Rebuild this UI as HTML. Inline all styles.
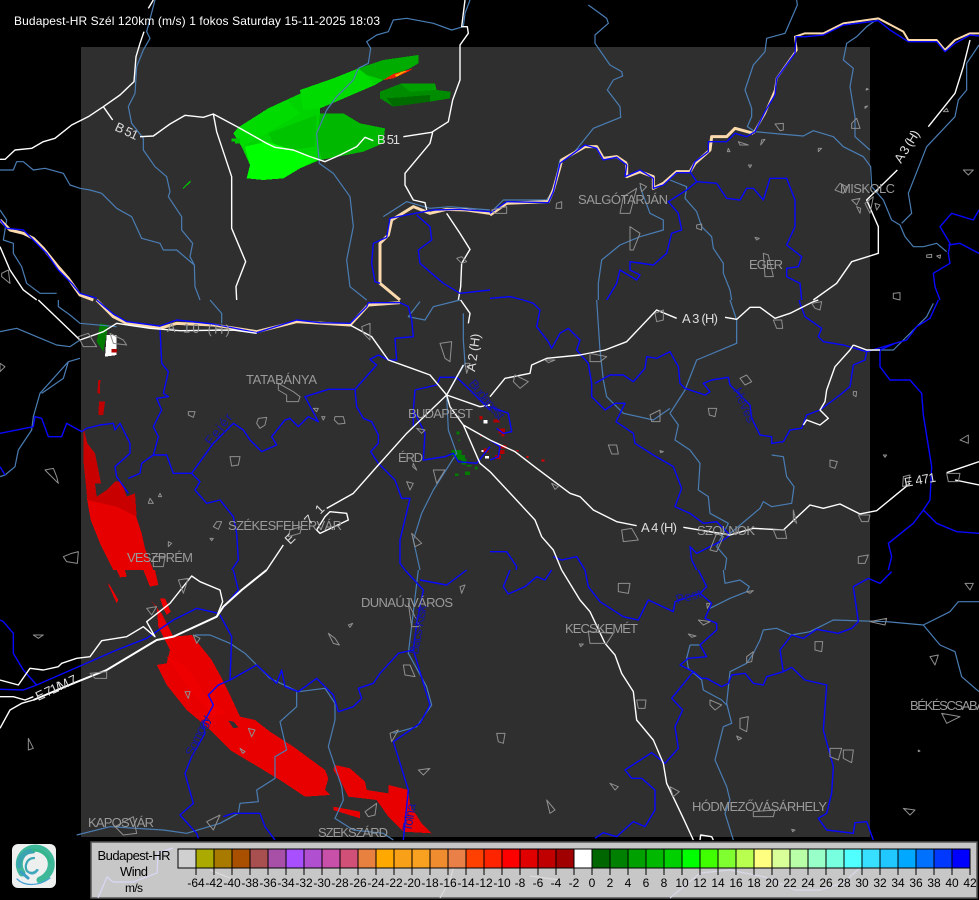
<!DOCTYPE html>
<html><head><meta charset="utf-8"><style>
html,body{margin:0;padding:0;background:#000;width:979px;height:900px;overflow:hidden}
svg{display:block;font-family:"Liberation Sans",sans-serif}
.t path{vector-effect:non-scaling-stroke;fill:none;stroke-linejoin:round}
.r{stroke:#fff;stroke-width:1.4}
.s{stroke:#4a7db4;stroke-width:1.2}
.b{stroke:#0808ff;stroke-width:1.4}
.c{stroke:#8f8f8f;stroke-width:1}
.n{stroke:#fad9ac;stroke-width:3}
.l{fill:#9a9a9a;font-size:13px}
.w{fill:#ddd;font-size:13px}
.d{fill:#1414a8;font-size:13px}
.k{font-size:12px;fill:#000;text-anchor:middle}
</style></head><body>
<svg width="979" height="900" viewBox="0 0 979 900" xmlns="http://www.w3.org/2000/svg">
<rect width="979" height="900" fill="#000"/>
<rect x="81" y="47" width="789" height="790" fill="#2f2f2f"/>

<!-- radar -->
<g shape-rendering="crispEdges">
<g transform="scale(.33333)">
<path fill="#00d400" d="M715 382 805 325 1000 235 1075 205 1150 180 1255 165 1255 190 1230 205 1150 240 1125 255 1020 300 960 325 960 340 1030 340 1080 370 1155 385 1150 430 1090 455 960 480 900 505 850 535 790 540 740 535 750 495 725 440 700 400Z"/>
<path fill="#00dc00" d="M715 382 805 325 860 300 900 340 800 400 725 440 700 400Z"/>
<path fill="#00ff00" d="M735 440 800 425 880 450 950 480 900 505 850 535 790 540 740 535 750 495Z"/>
<path fill="#00b800" d="M960 340 1030 340 1080 370 1155 385 1150 430 1090 455 965 478 950 420Z"/>
<path fill="#00c400" d="M805 400 950 345 945 440 880 450 820 430Z"/>
<path fill="#00ac00" d="M1075 205 1150 180 1255 165 1255 190 1230 205 1150 240 1100 225Z"/>
<path fill="#00dc00" d="M900 270 1000 235 1075 205 1100 225 1125 255 1020 300 960 325 910 330Z"/>
<path fill="#008c00" d="M1140 275 1205 250 1305 250 1310 270 1352 275 1350 295 1290 305 1180 320 1140 295Z"/>
<path fill="#006c00" d="M1160 295 1290 285 1290 305 1180 320Z"/>
<path fill="#00a000" d="M1200 250 1305 250 1310 270 1230 275Z"/>
<path fill="#ee2200" d="M1150 240 1180 222 1240 205 1225 215 1180 235Z"/>
<path fill="#ffa800" d="M1185 225 1210 214 1222 212 1190 230Z"/>
<path fill="#00c800" d="M548 565 572 540 572 546 551 566Z M695 415h25v15h-15v-5h-10Z"/>
</g>
<g transform="translate(0,300) scale(.33333)">
<path fill="#e60000" d="M260 590 320 595 405 640 425 700 435 745 460 810 340 810 300 730 272 660Z"/>
<path fill="#c80000" d="M250 380 262 430 285 460 303 550 285 550 290 590 320 570 345 545 365 545 380 590 405 580 410 650 350 620 262 600 250 480Z"/>
<path fill="#c00000" d="M295 240 301 240 300 280 292 280Z M297 305 315 305 310 345 295 345Z"/>
<path fill="#007a00" d="M300 70 325 75 310 155 290 125Z"/>
<path fill="#fff" d="M320 105 350 105 350 165 315 170Z"/>
<path fill="#b00000" d="M335 147h16v10h-16Z"/>
</g>
<g transform="translate(0,570) scale(.33333)">
<path fill="#e60000" d="M350 0h25l5 20-20 2Z M430 0h35l10 45-25 5Z"/>
<path fill="#ee0000" d="M325 38 355 90 350 100 325 45Z M480 85 495 85 512 125 500 135 490 115Z"/>
<path fill="#e80000" d="M455 95 485 130 520 200 575 195 635 270 665 325 690 375 720 440 765 450 810 485 880 530 975 600 985 625 975 660 990 675 915 680 840 630 790 600 690 540 620 470 560 420 500 345 470 285 500 280 510 240 475 170 470 110Z"/>
<path fill="#ee0000" d="M500 260 560 290 620 380 680 430 640 440 560 350Z"/>
<path fill="#2f2f2f" d="M685 452 700 455 716 472 700 475Z"/>
<path fill="#e80000" d="M1005 585 1050 595 1095 635 1100 660 1165 670 1165 645 1225 660 1230 705 1265 760 1295 790 1210 785 1165 740 1130 690 1045 680 1020 630 1000 600Z"/>
<path fill="#e80000" d="M1000 710 1080 725 1080 745 1000 720Z"/>
</g>
<g transform="translate(400,370) scale(.33333)">
<path fill="#b00000" d="M238 138h10v10h-10Z M280 148h18v10h-18Z M295 175h20v15h-20Z M305 190h8v10h-8Z M300 225h20v10h-20Z M295 240h18v12h-18Z M285 255h18v12h-18Z M250 235h15v12h-15Z M240 195h5v5h-5Z"/>
<path fill="#e00000" d="M350 240h5v5h-5Z M380 258h6v6h-6Z M425 268h8v6h-8Z"/>
<path fill="#fff" d="M250 150h12v10h-12Z M255 258h12v8h-12Z M245 240h6v6h-6Z"/>
<path fill="#007c00" d="M170 185h8v8h-8Z M155 240h30v18h-30Z M170 255h25v15h-25Z M185 265h15v18h-15Z M200 285h15v5h-15Z M195 305h15v10h-15Z M165 310h10v8h-10Z M225 290h8v8h-8Z M175 208h5v5h-5Z"/>
</g>
</g>

<!-- map lines -->
<g class="t">
<g transform="scale(.33333)">
<path class="s" d="M465 0 440 95 450 115 430 150 410 200 405 280 385 320 395 370 430 415 430 450 465 500 500 530 510 575 505 590 545 650 545 690 578 730 570 770 583 795 585 860 600 900"/>
<path class="s" d="M0 510 40 510 50 485 70 485 100 510 135 505 190 520 210 555 240 565 270 570 305 580 350 625 395 650 425 715 480 730 490 750 530 750 583 795"/>
<path class="s" d="M1390 80 1355 90 1300 70 1220 55 1180 60 1165 95 1130 105 1100 125 1112 145 1105 190 1075 205 1060 240 1010 290 980 330 950 400 958 490 1000 520 1050 590 1060 680 1040 780 1050 860 1100 900 M1410 0 1395 40 1390 80"/>
<path class="s" d="M0 630 20 660 10 720 40 730 40 760 65 800 80 850 120 880 170 880 M1150 650 1220 605 1290 625 1350 620 1470 630"/>
<path class="r" d="M460 0 445 25 M432 95 420 130 408 170 402 245 360 285 310 320 265 350 215 375 165 415 130 425 95 445 45 450 15 478 0 478 M310 320 338 360 M420 410 460 408 510 372 555 346 610 352 640 342 715 382 800 430 825 442 880 450 925 468 975 485 1020 465 1070 440 1095 412 1120 422 M1210 410 1295 397 1345 365 1358 300 1380 240 1380 135 1405 100 1402 80 1385 80 1395 0 M1298 397 1290 430 1215 520 1215 555 1240 600 1275 608 1280 630 M640 342 650 395 665 440 695 530 695 685 737 785 708 860 710 900 M1340 640 1380 700 1410 748 1385 790 1382 860 1375 900 M0 740 30 810 70 870 110 900"/>
<path class="n" d="M0 660 30 690 70 700 100 715 130 745 170 795 205 835 240 885 280 900 M1200 900 1140 850 1140 730 1165 705 1175 660 1240 620 1290 640 1340 628 1400 630 1470 640"/>
<path class="b" d="M0 660 20 685 70 690 100 720 140 760 175 810 215 850 240 880 290 895 M1120 730 1115 790 1125 845 1140 850 M1120 730 1160 712 1170 655 1220 645 1300 630 1380 628 1470 635 M1250 645 1290 680 1295 720 1255 750 1260 790 1330 850 1380 880 1470 870"/>
<path class="c" d="M5 820 25 810 30 850 5 830Z M1370 775 1385 770 1400 785 1385 790Z"/>
</g>
<g transform="translate(490,0) scale(.33333)">
<path class="s" d="M295 15 350 55 355 70 315 105 315 130 360 195 395 215 398 228 370 240 352 270 390 320 392 352 310 385 250 460 210 480 190 570 170 600 40 600 0 640"/>
<path class="s" d="M920 0 922 15 885 100 830 115 825 155 790 195 765 270 785 325 785 350 772 380 795 395 870 402 940 408 970 392 1030 410 1060 440 1120 470 1142 500 1145 560 1180 600 1205 660 1230 675 1245 710 1270 740 1300 740 1340 730 1370 755 M1165 55 1130 80 1100 110 1070 130 1060 180 1090 205 1080 260 1095 350 1095 410 1140 450 M1467 135 1430 190 1430 270 1405 300 1395 350 1310 440 1255 580 1265 640 1235 670 M540 540 590 560 585 595 620 635 635 680 665 710 670 745 700 790 700 820 720 870 725 900 M450 560 480 640 520 660 520 690 450 710 390 735 335 780 325 850 325 900"/>
<path class="n" d="M0 645 50 610 175 605 190 570 210 500 215 480 285 440 320 440 340 475 380 470 410 490 M410 490 410 530 450 515 490 530 490 565 520 550 560 515 600 515 615 490 660 450 665 410 710 410 735 385 790 400"/>
<path class="n" style="stroke-width:2" d="M790 400 825 340 855 270 860 235 920 150 915 110 945 100 1000 100 1060 70 1165 55 1240 95 1255 120 1340 120 1365 150 1395 120 1440 100 1467 100"/>
<path class="b" d="M0 640 50 605 175 608 190 575 210 490 285 435 320 445 340 480 380 472 410 495 405 530 450 510 490 535 490 565 520 555 560 518 600 518 615 485 655 455 655 425 710 425 735 400 770 410 795 395 825 335 855 285 860 235 915 160 918 110 945 110 1000 105 1060 75 1165 62 1200 90 1255 125 1340 125 1365 155 1395 130 1440 105 1467 108"/>
<path class="b" d="M600 515 620 545 680 550 710 595 750 600 770 565 790 565 820 600 840 535 890 535 915 600 915 680 890 735 935 770 925 800 890 805 890 830 930 850 935 900 M620 545 590 570 535 605 565 640 575 690 545 700 530 760 490 795 420 785 420 810 450 825 440 840 390 810 380 850 350 900 M0 895 60 890 100 900 M1467 630 1450 660 1385 640 1350 680 1380 730 1375 760 1380 790 1330 820 1335 860 1350 900 M1375 735 1410 730 1467 760"/>
<path class="r" d="M1440 120 1420 200 1395 280 1315 380 M1222 510 1130 600 1165 680 1165 760 1085 785 1040 850 970 900"/>
<path class="c" d="M1050 550 1070 560 1060 580 1035 570Z M1085 600 1110 595 1100 615Z M1100 620 1112 625 1110 640Z M1125 610 1150 590 1140 640Z M1155 610 1170 615 1160 630Z M400 590 440 565 420 640 390 640Z M450 550 470 560 455 575Z M420 680 450 700 430 750 420 750Z M855 372 880 370 880 390 870 392Z M1085 370 1100 355 1110 385 1085 385Z M200 610 215 605 215 625 198 625Z M620 675 635 672 635 690 620 685Z M820 760 835 765 850 830 825 830Z M1210 880 1230 878 1230 900 1210 895Z M1420 510 1450 510 1435 525Z M1370 325 1375 335 1360 335Z M745 425 775 435 750 435Z M815 420 825 418 812 435Z M715 445 720 455 712 455Z M775 495 785 495 780 503Z M5 630 50 620 50 640 15 640Z M795 712 808 715 800 720Z M985 445 995 445 985 455Z M1130 265 1135 268 1128 270Z M1125 320 1133 318 1125 325Z M1310 765 1325 763 1325 772 1310 772Z M1340 768 1352 765 1350 775Z"/>
</g>
<g transform="translate(0,300) scale(.33333)">
<path class="s" d="M0 95 50 85 110 110 170 135 210 140 240 120 M240 175 205 185 120 280 100 350 95 390 55 450 45 500 15 525 0 530 M205 185 190 235 125 280 M175 0 175 20 210 45 240 70 350 80 M630 0 665 40 665 70 M1260 5 1225 50 1275 60 1300 20 1380 0 M1390 40 1390 120 1395 190 1340 285 1345 390 1370 460 1300 570 1265 640 1240 720 1260 810 M1270 480 1335 470"/>
<path class="n" d="M290 0 340 50 380 70 480 85 530 70 640 75 770 95 890 65 1050 75 1105 15 1200 8"/>
<path class="b" d="M290 0 340 42 380 65 480 78 530 60 640 72 770 98 890 60 960 68 1050 70 1100 20 1105 8 1200 8"/>
<path class="b" d="M480 85 485 190 505 215 490 280 505 290 470 295 485 330 460 380 475 410 460 465 500 465 520 520 575 520 640 430 700 370 730 390 750 420 785 455 830 435 815 410 855 360 870 355 895 380 925 350 955 365 915 290 985 268 1065 268 1130 195 1110 178 1135 165 1165 180 1190 180 1185 115 1240 110 1235 60 1225 20 1200 8 M1065 268 1070 320 1090 355 1115 365 1135 405 1135 430 1112 455 1135 490 1185 540 1205 595 1230 595 1200 720 1200 790 1215 810 M1240 380 1240 330 1245 270 1310 255 1320 232 1370 232 1410 270 1470 330 M1240 330 1275 400 1270 480 1335 470 1360 460 1375 485 1430 490 1470 440 M0 400 100 380 105 350 125 355 145 410 185 410 200 370 245 395 260 385 300 375 340 370 345 390 360 370 390 430 390 460 345 500 350 530 385 580 M385 535 420 520 425 490 460 465 M575 520 600 545 585 570 620 610 660 600 700 650 710 700 715 780 695 810 M0 500 15 525"/>
<path class="r" d="M115 0 240 120 M240 120 310 95 350 70 450 85 540 92 700 90 770 100 M1050 75 1115 110 1165 180 1235 205 1290 225 1340 285 1440 320 1470 315 M1340 285 1220 400 1135 495 1060 580 980 625 M850 735 800 810 M1390 195 1340 285 M1382 0 1410 40 1405 70 M1340 285 1350 320 1390 375 1440 490 1470 515 M1390 375 1470 420"/>
<path class="r" d="M990 635 1040 640 1045 660 960 700 950 690 975 650Z"/>
<path class="c" d="M835 250 880 275 900 290 895 305 860 305 860 285 835 270Z M565 335 585 335 580 352 565 345Z M775 355 800 352 795 375 780 385 770 370Z M1005 350 1030 350 1035 370 1015 372 1003 360Z M690 470 720 470 715 495 695 498Z M135 510 160 505 170 530 175 550 150 525Z M650 665 665 665 655 688 640 680Z M1320 130 1355 125 1350 185 1335 175Z M1240 490 1250 510 1238 500Z M190 770 215 760 235 755 232 790 200 785Z M450 595 460 610 445 610Z M1235 700 1245 740 1265 730Z M1300 510 1335 510 1310 550Z M1220 545 1240 550 1230 570Z M1250 385 1275 390 1265 400Z M940 325 955 325 950 335Z M965 350 975 350 970 360Z M630 715 640 715 635 722Z M505 725 515 730 505 740Z M0 190 15 200 0 215Z M235 110 265 100 290 140 250 140Z M330 100 370 120 380 135 340 130Z M1085 80 1110 70 1110 120 1090 100Z M1395 190 1410 190 1400 220Z M870 690 905 680 900 700 865 710Z M460 770 495 770 490 800 460 800Z M480 580 485 590 475 590Z"/>
</g>
<g transform="translate(490,300) scale(.33333)">
<path class="s" d="M720 0 740 60 740 130 620 180 585 270 540 340 565 375 555 420 600 450 630 490 625 570 655 590 660 640 715 670 680 740 710 775 705 810 M320 0 330 150 340 240 350 290 400 340 490 360 540 325 M845 465 880 470 890 530 912 560 905 610 845 620 820 605 810 625 715 705 M1170 150 1210 150 1310 50 1330 10"/>
<path class="b" d="M100 0 130 10 150 30 140 80 175 125 185 145 210 100 235 85 270 120 260 150 295 190 305 250 305 290 345 330 375 310 405 310 378 365 430 400 435 430 490 465 550 500 575 565 555 620 600 640 640 670 680 665 720 705 700 720 620 760 600 740 605 780 620 810 M315 250 360 225 400 225 430 245 465 205 470 170 500 175 540 155 565 200 570 250 585 265 645 285 660 275 640 250 665 240 715 232 720 255 780 315 785 355 810 405 845 410 845 430 880 425 900 390 935 385 950 345 990 330 1050 285 1080 260 1090 195 1125 180 1130 155 1060 135 1000 125 985 110 995 85 945 50 930 10 928 0 M1170 150 1215 130 1250 120 1280 80 1320 55 1345 0 M1170 150 1170 200 1200 240 1260 240 1295 280 1300 345 1325 500 1320 600 1300 630 1340 670 1400 695 1467 700 M1300 630 1270 670 1195 730 1205 770 1195 810 M0 755 50 755 80 800 78 810 M190 770 215 780 260 770 285 810 M0 320 55 340 65 395 40 400 20 385 M0 420 30 440 25 470 0 480 M1130 155 1215 130"/>
<path class="r" d="M0 290 45 235 120 220 125 195 170 175 270 165 345 150 410 125 500 30 560 55 M705 52 740 58 780 22 810 22 855 55 900 40 970 5 985 0 M0 420 75 455 140 505 240 580 270 590 310 630 380 665 440 677 M580 682 720 705 790 685 880 690 960 615 1000 625 1050 612 1110 642 1160 632 1260 550 M1370 518 1467 485 M1395 540 1467 555 M0 515 70 590 135 660 155 710 190 750 215 810 M1090 135 1080 150 1035 200 1010 270 1005 305 990 330 1015 355 990 375 950 360 940 375 M1090 135 1130 150 1170 150"/>
<path class="c" d="M75 225 115 245 90 265 70 245Z M165 180 195 180 175 188Z M300 160 350 170 330 185 300 185Z M495 40 520 30 520 60 500 65Z M850 60 875 60 878 85 860 85Z M965 10 995 5 990 30 975 25Z M480 345 510 330 510 365 485 365Z M750 235 770 225 785 245 765 255Z M655 325 680 325 675 350 658 345Z M355 435 380 435 385 462 365 462Z M395 690 425 685 445 720 400 725Z M850 690 885 690 890 715 860 715Z M660 750 680 700 700 710 680 755Z M1020 480 1042 485 1035 505 1020 500Z M1105 645 1140 645 1135 665 1115 665Z M1105 770 1135 765 1125 790 1105 790Z M1410 420 1435 405 1435 430Z M1240 530 1260 525 1255 555 1238 560Z M1370 520 1410 520 1405 545 1375 545Z M1180 465 1190 465 1185 472Z M510 452 520 455 512 458Z M185 550 205 560 195 568Z M1090 275 1100 275 1098 290 1090 285Z M910 630 920 670 910 660Z"/>
</g>
<g transform="translate(0,570) scale(.33333)">
<path class="s" d="M585 195 630 195 690 220 735 250 770 285 810 325 895 365 975 355 1005 400 1005 450 985 530 1025 650 1030 690 1005 745 1060 780 1150 790 1180 810 M890 365 890 410 840 455 860 540 825 560 825 625 770 660 775 695 720 700 715 730 660 760 560 790 490 780 330 770 230 795 M1255 0 1225 250 1280 350 1295 405 1250 470 1180 490"/>
<path class="b" d="M700 0 715 60 655 130 590 115 520 150 440 205 350 240 110 345 70 360 0 358 M110 345 70 300 40 250 40 190 10 155 0 150 M660 135 695 200 690 330 770 285 830 340 845 300 855 350 895 365 950 325 1000 375 1015 425 1060 410 1085 385 1075 355 1120 340 1140 310 1195 250 1240 240 1250 160 1270 60 1215 0 M690 330 655 345 625 375 640 405 610 460 615 490 575 560 555 610 580 700 540 735 590 790 595 805 M1240 240 1290 405 1260 460 1180 515 1225 660 1210 810 M670 740 700 730 780 730 795 770 825 810 M1260 30 1340 45 1400 0"/>
<path class="r" style="stroke-width:2" d="M800 0 725 60 670 110 650 140 520 200 470 210 320 300 220 340 100 390"/>
<path class="r" d="M100 390 65 400 30 420 0 475 M0 380 40 380 75 390 100 380 M0 330 55 345 90 295 130 300 175 290 185 280 230 265 270 260 305 212 380 200 430 170 465 200 440 155 510 100 575 18 600 35 660 60 668 95 650 140"/>
<path class="c" d="M985 190 1005 205 1018 225 1000 220Z M1210 285 1230 285 1245 320 1215 315Z M1170 490 1195 480 1175 515Z M1255 600 1290 595 1270 615Z M1095 725 1130 700 1125 735 1105 740Z M620 755 660 735 640 780Z M345 770 400 740 410 790 370 795Z M745 475 765 480 755 500Z M555 365 570 365 565 385Z M85 505 100 535 85 540Z M100 195 130 195 115 205Z M535 30 565 25 550 70Z M440 115 470 110 455 135Z M1225 100 1260 170 1235 170Z M1380 50 1395 45 1385 70Z M720 535 735 545 728 550Z M1045 165 1058 160 1050 172Z M580 195 600 205 590 220Z M270 310 320 305 320 325 285 325Z"/>
</g>
<g transform="translate(490,570) scale(.33333)">
<path class="s" d="M700 0 705 40 750 30 778 50 770 65 720 85 660 115 M1467 95 1405 95 1380 125 1300 165 1190 155 1030 150 960 185 905 195 860 175 820 180 810 210 790 250 770 280 720 305 710 400 725 460 700 470 675 570 710 650 720 690 705 730 730 810 M600 225 630 225 M600 225 590 265 595 295 635 330 640 360 695 390 710 405 M1300 165 1350 225 1395 245 1415 320 1467 365"/>
<path class="b" d="M60 0 40 50 55 72 105 50 140 20 165 30 185 0 M285 0 295 50 330 95 400 140 445 150 475 90 550 125 555 95 630 70 650 50 625 0 M630 70 665 100 645 145 680 160 680 180 630 225 650 260 595 265 570 285 610 305 545 385 578 420 555 470 565 535 525 580 485 548 405 600 425 625 455 625 495 660 495 720 465 770 430 755 380 800 340 788 315 805 M610 305 635 325 650 325 695 350 715 340 725 315 765 310 790 340 820 345 830 320 880 305 905 292 945 330 1010 345 1000 480 1030 590 1025 670 1010 730 985 745 1010 780 1090 790 1095 758 1130 755 1150 810 M880 305 870 240 905 195 940 205 980 178 1045 190 1085 175 1105 155 1090 50 1135 25 1170 40 1205 5"/>
<path class="r" d="M215 0 270 90 300 125 345 220 375 255 395 310 430 365 440 450 490 510 520 580 530 640 580 745 610 810 M630 810 632 795 665 800 670 810"/>
<path class="c" d="M385 40 420 40 415 70 385 65Z M295 185 370 190 350 220 300 220Z M440 390 468 390 465 415 445 415Z M20 490 45 490 40 520 25 515Z M360 640 385 650 375 660Z M170 690 195 720 180 730Z M540 650 568 665 550 680Z M660 390 695 405 675 420 660 405Z M750 445 775 440 770 485 750 475Z M975 215 998 215 995 245 975 240Z M770 260 790 245 785 275 770 278Z M1020 535 1055 535 1045 570 1020 560Z M1060 540 1090 540 1085 578 1060 565Z M790 725 855 720 850 740 790 740Z M1240 715 1275 720 1260 735Z M1320 260 1345 255 1335 285Z M1355 430 1410 440 1370 460Z M1425 40 1450 40 1440 60Z M625 150 660 155 640 165Z M1140 155 1190 145 1185 165Z M770 65 790 62 780 70Z M650 100 660 100 652 115Z M595 192 618 198 605 202Z M740 498 755 505 745 510Z M905 778 915 780 908 785Z M1285 540 1290 543 1285 545Z M268 222 280 222 272 230Z"/>
</g>
</g>

<!-- labels -->
<text x="14" y="25" font-size="12" fill="#fff" textLength="366" lengthAdjust="spacing">Budapest-HR Szél 120km (m/s) 1 fokos Saturday 15-11-2025 18:03</text>
<g class="l">
<text x="578" y="204" textLength="90">SALGÓTARJÁN</text>
<text x="840" y="193" textLength="55">MISKOLC</text>
<text x="749" y="269" textLength="34">EGER</text>
<text x="246" y="384" textLength="71">TATABÁNYA</text>
<text x="408" y="418" textLength="65">BUDAPEST</text>
<text x="398" y="462" textLength="25">ÉRD</text>
<text x="228" y="530" textLength="114">SZÉKESFEHÉRVÁR</text>
<text x="127" y="562" textLength="66">VESZPRÉM</text>
<text x="361" y="607" textLength="92">DUNAÚJVÁROS</text>
<text x="565" y="633" textLength="73">KECSKEMÉT</text>
<text x="692" y="811" textLength="135">HÓDMEZŐVÁSÁRHELY</text>
<text x="910" y="710" textLength="75">BÉKÉSCSABA</text>
<text x="88" y="827" textLength="66">KAPOSVÁR</text>
<text x="318" y="837" textLength="70">SZEKSZÁRD</text>
<text x="697" y="535" textLength="58">SZOLNOK</text>
<text x="167" y="333" textLength="63" transform="rotate(2 198 330)">A 10 (H)</text>
</g>
<g class="w">
<text x="682" y="323" textLength="36">A 3 (H)</text>
<text x="641" y="532" textLength="36">A 4 (H)</text>
<text x="377" y="144" textLength="23">B 51</text>
<text transform="translate(114,130) rotate(25)" textLength="24">B 51</text>
<text transform="translate(901,164) rotate(-58)" textLength="36">A 3 (H)</text>
<text transform="translate(475,372) rotate(-82)" textLength="38">A 2 (H)</text>
<text transform="translate(905,487) rotate(-10)" textLength="32">E 471</text>
<text transform="translate(38,701) rotate(-25)" textLength="44">E 71/M 7</text>
<text transform="translate(290,545) rotate(-45)" textLength="50">E 71</text>
</g>
<g class="d">
<text transform="translate(211,446) rotate(-52)" textLength="36">Fejér</text>
<text transform="translate(733,390) rotate(66)" textLength="37">Heves</text>
<text transform="translate(677,604) rotate(-15)" textLength="26">Pest</text>
<text transform="translate(193,757) rotate(-66)" textLength="43">Somogy</text>
<text transform="translate(411,832) rotate(-80)" textLength="28">Tolna</text>
<text transform="translate(418,655) rotate(-80)" textLength="50">Bács-Kisk</text>
<text transform="translate(468,384) rotate(50)" textLength="48">Budapest</text>
</g>

<!-- logo -->
<rect x="12" y="844" width="44" height="44" rx="6" fill="#eef0f0"/>
<g fill="none" stroke-linecap="round">
<path d="M22 873A16 16 0 1 1 47 875 16 16 0 0 1 40 880" stroke="#3fb89a" stroke-width="7"/>
<path d="M19 866A14 14 0 0 1 33 851" stroke="#3aa4b0" stroke-width="5"/>
<path d="M33 850A17 17 0 0 1 50 862" stroke="#35b58c" stroke-width="3"/>
<path d="M21 872 28 878" stroke="#3a9ec4" stroke-width="3"/>
<path d="M37 870A6.500 6.500 0 0 1 27 871C24 866 27 858 34 858" stroke="#3aa6b4" stroke-width="2.200"/>
<path d="M29 873C33 875 36 873 38 870" stroke="#46a8c4" stroke-width="1.500"/>
<path d="M17 879C24 886 38 887 50 878" stroke="#4aa0d4" stroke-width="1.300"/>
</g>

<!-- legend -->
<rect x="91" y="842" width="886" height="56" fill="#c7c7c7" stroke="#555" stroke-width="1.500"/>
<g fill="none" stroke-width="1.200">
<path stroke="#d8d8f8" d="M98 898 107 877 113 882 133 882 157 873 158 853 173 848"/>
<path stroke="#d8d8e8" d="M670 898 700 873 730 870 765 877 795 890 820 890 843 883 880 850"/>
<path stroke="#dcdcdc" d="M440 898 450 880 455 862 M210 870 235 880 M530 876 560 880"/>
</g>
<g stroke="#000" stroke-width="1" shape-rendering="crispEdges">
<rect x="178" y="849" width="18" height="19" fill="#d0d0d0"/>
<rect x="196" y="849" width="18" height="19" fill="#aaaa00"/>
<rect x="214" y="849" width="18" height="19" fill="#a87a00"/>
<rect x="232" y="849" width="18" height="19" fill="#a85000"/>
<rect x="250" y="849" width="18" height="19" fill="#a85050"/>
<rect x="268" y="849" width="18" height="19" fill="#a850a8"/>
<rect x="286" y="849" width="18" height="19" fill="#a850ff"/>
<rect x="304" y="849" width="18" height="19" fill="#b050d0"/>
<rect x="322" y="849" width="18" height="19" fill="#c850a8"/>
<rect x="340" y="849" width="18" height="19" fill="#d05078"/>
<rect x="358" y="849" width="18" height="19" fill="#e88040"/>
<rect x="376" y="849" width="18" height="19" fill="#ffa800"/>
<rect x="394" y="849" width="18" height="19" fill="#f8a018"/>
<rect x="412" y="849" width="18" height="19" fill="#f8a020"/>
<rect x="430" y="849" width="18" height="19" fill="#f08c30"/>
<rect x="448" y="849" width="18" height="19" fill="#e88048"/>
<rect x="466" y="849" width="18" height="19" fill="#ff4000"/>
<rect x="484" y="849" width="18" height="19" fill="#ff2400"/>
<rect x="502" y="849" width="18" height="19" fill="#ff0000"/>
<rect x="520" y="849" width="18" height="19" fill="#e00000"/>
<rect x="538" y="849" width="18" height="19" fill="#c00000"/>
<rect x="556" y="849" width="18" height="19" fill="#a00000"/>
<rect x="574" y="849" width="18" height="19" fill="#ffffff"/>
<rect x="592" y="849" width="18" height="19" fill="#006600"/>
<rect x="610" y="849" width="18" height="19" fill="#008000"/>
<rect x="628" y="849" width="18" height="19" fill="#00a000"/>
<rect x="646" y="849" width="18" height="19" fill="#00b800"/>
<rect x="664" y="849" width="18" height="19" fill="#00d000"/>
<rect x="682" y="849" width="18" height="19" fill="#00ff00"/>
<rect x="700" y="849" width="18" height="19" fill="#40ff00"/>
<rect x="718" y="849" width="18" height="19" fill="#80ff30"/>
<rect x="736" y="849" width="18" height="19" fill="#b8ff50"/>
<rect x="754" y="849" width="18" height="19" fill="#ffff80"/>
<rect x="772" y="849" width="18" height="19" fill="#d8ff98"/>
<rect x="790" y="849" width="18" height="19" fill="#b8ffa8"/>
<rect x="808" y="849" width="18" height="19" fill="#98ffc8"/>
<rect x="826" y="849" width="18" height="19" fill="#78ffe0"/>
<rect x="844" y="849" width="18" height="19" fill="#50ffff"/>
<rect x="862" y="849" width="18" height="19" fill="#38e0ff"/>
<rect x="880" y="849" width="18" height="19" fill="#20c8ff"/>
<rect x="898" y="849" width="18" height="19" fill="#00a8ff"/>
<rect x="916" y="849" width="18" height="19" fill="#0070ff"/>
<rect x="934" y="849" width="18" height="19" fill="#0038ff"/>
<rect x="952" y="849" width="18" height="19" fill="#0000ff"/>
<path d="M196 868v7M214 868v7M232 868v7M250 868v7M268 868v7M286 868v7M304 868v7M322 868v7M340 868v7M358 868v7M376 868v7M394 868v7M412 868v7M430 868v7M448 868v7M466 868v7M484 868v7M502 868v7M520 868v7M538 868v7M556 868v7M574 868v7M592 868v7M610 868v7M628 868v7M646 868v7M664 868v7M682 868v7M700 868v7M718 868v7M736 868v7M754 868v7M772 868v7M790 868v7M808 868v7M826 868v7M844 868v7M862 868v7M880 868v7M898 868v7M916 868v7M934 868v7M952 868v7M970 868v7"/>
</g>
<g font-size="13" fill="#000" text-anchor="middle">
<text x="134" y="860" textLength="73">Budapest-HR</text>
<text x="134" y="876" textLength="28">Wind</text>
<text x="134" y="892" font-size="12" textLength="18">m/s</text>
</g>
<g class="k">
<text x="196" y="887">-64</text><text x="214" y="887">-42</text><text x="232" y="887">-40</text><text x="250" y="887">-38</text><text x="268" y="887">-36</text><text x="286" y="887">-34</text><text x="304" y="887">-32</text><text x="322" y="887">-30</text><text x="340" y="887">-28</text><text x="358" y="887">-26</text><text x="376" y="887">-24</text><text x="394" y="887">-22</text><text x="412" y="887">-20</text><text x="430" y="887">-18</text><text x="448" y="887">-16</text><text x="466" y="887">-14</text><text x="484" y="887">-12</text><text x="502" y="887">-10</text><text x="520" y="887">-8</text><text x="538" y="887">-6</text><text x="556" y="887">-4</text><text x="574" y="887">-2</text><text x="592" y="887">0</text><text x="610" y="887">2</text><text x="628" y="887">4</text><text x="646" y="887">6</text><text x="664" y="887">8</text><text x="682" y="887">10</text><text x="700" y="887">12</text><text x="718" y="887">14</text><text x="736" y="887">16</text><text x="754" y="887">18</text><text x="772" y="887">20</text><text x="790" y="887">22</text><text x="808" y="887">24</text><text x="826" y="887">26</text><text x="844" y="887">28</text><text x="862" y="887">30</text><text x="880" y="887">32</text><text x="898" y="887">34</text><text x="916" y="887">36</text><text x="934" y="887">38</text><text x="952" y="887">40</text><text x="970" y="887">42</text>
</g>
</svg>
</body></html>
